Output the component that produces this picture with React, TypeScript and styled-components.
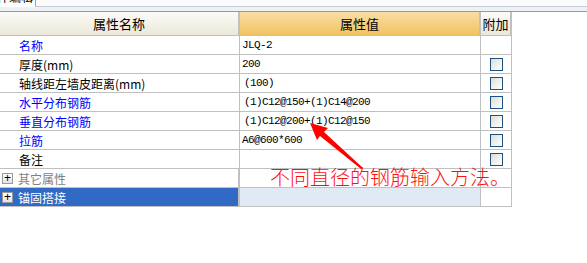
import React from 'react';
import styled, {createGlobalStyle, css} from "styled-components";

const GlobalStyle = createGlobalStyle`
body {
  margin: 0;
  background: #ffffff;
  font-family: "Noto Sans CJK SC", "Liberation Sans", sans-serif;
}
`

type Prop = {
    name: string
    value: string
    tone?: 'blue' | 'black'
    check?: boolean
}

const props: Prop[] = [
    {name: '名称', value: 'JLQ-2', tone: 'blue', check: false},
    {name: '厚度(mm)', value: '200', check: true},
    {name: '轴线距左墙皮距离(mm)', value: '(100)', check: true},
    {name: '水平分布钢筋', value: '(1)C12@150+(1)C14@200', tone: 'blue', check: true},
    {name: '垂直分布钢筋', value: '(1)C12@200+(1)C12@150', tone: 'blue', check: true},
    {name: '拉筋', value: 'A6@600*600', tone: 'blue', check: true},
    {name: '备注', value: '', check: true},
]

export default function App() {
    return (
        <Page>
            <GlobalStyle/>
            <TabStrip>
                <Tab><TabLabel>件编辑</TabLabel></Tab>
                <TabRest/>
            </TabStrip>
            <Grid>
                <HeaderRow>
                    <HeadCell>属性名称</HeadCell>
                    <HeadCell accent>属性值</HeadCell>
                    <HeadCell>附加</HeadCell>
                </HeaderRow>
                {props.map(p => (
                    <Row key={p.name}>
                        <NameCell tone={p.tone}>{p.name}</NameCell>
                        <ValueCell indent={p.value.startsWith('(')}>{p.value}</ValueCell>
                        <CheckCell>{p.check && <Check/>}</CheckCell>
                    </Row>
                ))}
                <Row>
                    <GroupCell><Plus>+</Plus>其它属性</GroupCell>
                    <ValueCell/>
                    <CheckCell/>
                </Row>
                <Row>
                    <GroupCell selected><Plus>+</Plus>锚固搭接</GroupCell>
                    <ValueCell selected/>
                    <CheckCell/>
                </Row>
            </Grid>
            <Note>不同直径的钢筋输入方法。</Note>
            <Arrow width="60" height="52" viewBox="0 0 60 52">
                <polygon points="1,1 19,6 15,10 54,46 52,47 11,14 8,18" fill="#ff0000"/>
            </Arrow>
        </Page>
    );
}

const Page = styled.div`
position: relative;
width: 587px;
height: 263px;
overflow: hidden;
`

const TabStrip = styled.div`
display: flex;
align-items: flex-start;
height: 11px;
background: #eef1f6;
border-bottom: 1px solid #8b9db6;
`

const Tab = styled.div`
width: 35px;
height: 7px;
overflow: hidden;
background: #ffffff;
display: flex;
justify-content: flex-end;
`

const TabLabel = styled.span`
margin-top: -10px;
margin-right: 2px;
font-size: 12px;
line-height: 14px;
color: #000;
white-space: nowrap;
`

const TabRest = styled.div`
flex: 1;
height: 6px;
background: #fafbfd;
border-left: 1px solid #a3a7ad;
border-bottom: 1px solid #c6cbd3;
`

const Grid = styled.div`
width: 512px;
display: flex;
flex-direction: column;
`

const rowLayout = css`
display: grid;
grid-template-columns: 240px 241px 31px;
`

const HeaderRow = styled.div`
${rowLayout};
height: 24px;
`

const Row = styled.div`
${rowLayout};
height: 19px;
`

const cellBase = css`
box-sizing: border-box;
border-right: 1px solid #c0c0c0;
border-bottom: 1px solid #c0c0c0;
display: flex;
align-items: center;
white-space: nowrap;
overflow: hidden;
`

const HeadCell = styled.div<{ accent?: boolean }>`
${cellBase};
justify-content: center;
font-size: 13px;
color: #000;
background: ${p => p.accent
    ? 'linear-gradient(#f9dea4, #f1c262)'
    : 'linear-gradient(#fcfbf7, #ebe8da)'};
border-right-width: 2px;
`

const NameCell = styled.div<{ tone?: 'blue' | 'black' }>`
${cellBase};
padding-left: 19px;
font-size: 12px;
color: ${p => p.tone === 'blue' ? '#0000ff' : '#000000'};
`

const GroupCell = styled.div<{ selected?: boolean }>`
${cellBase};
padding-left: 2px;
gap: 5px;
font-size: 12px;
color: ${p => p.selected ? '#ffffff' : '#808080'};
background: ${p => p.selected ? '#316ac5' : '#ffffff'};
border-right-width: 2px;
`

const Plus = styled.span`
box-sizing: border-box;
width: 11px;
height: 11px;
display: flex;
align-items: center;
justify-content: center;
border: 1px solid #9a9a9a;
background: linear-gradient(#ffffff, #e4e4e4);
color: #000;
font-family: "Liberation Sans", sans-serif;
font-size: 12px;
line-height: 11px;
`

const ValueCell = styled.div<{ selected?: boolean; indent?: boolean }>`
${cellBase};
padding-left: ${p => p.indent ? '4px' : '2px'};
font-family: "Liberation Mono", monospace;
font-size: 11px;
letter-spacing: -0.6px;
color: #000;
background: ${p => p.selected ? '#e0e9f4' : '#ffffff'};
`

const CheckCell = styled.div`
${cellBase};
justify-content: center;
padding-left: 1px;
`

const Check = styled.span`
box-sizing: border-box;
width: 13px;
height: 13px;
border: 1px solid #1c5180;
background: linear-gradient(135deg, #dcdcd6, #f6f6f4 70%, #ffffff);
`

const Note = styled.div`
position: absolute;
left: 270px;
top: 166px;
font-size: 20px;
font-weight: 300;
line-height: 22px;
color: #ff1010;
white-space: nowrap;
`

const Arrow = styled.svg`
position: absolute;
left: 309px;
top: 122px;
`
